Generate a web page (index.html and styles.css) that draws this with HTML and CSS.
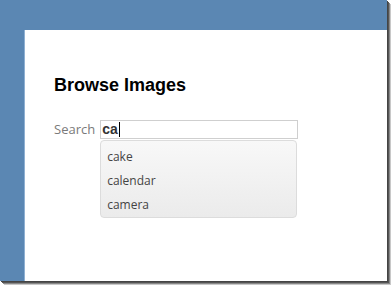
FILE: index.html
```html
<!DOCTYPE html>
<html>
<head>
<meta charset="utf-8">
<link rel="stylesheet" href="styles.css">
</head>
<body>
<div class="frame">
  <div class="panel">
    <h1 class="title">Browse Images</h1>
    <div class="search-row">
      <label class="search-label">Search</label>
      <div class="search-box">
        <div class="search-input"><span class="typed">ca</span><span class="caret"></span></div>
        <ul class="suggestions">
          <li class="item">cake</li>
          <li class="item">calendar</li>
          <li class="item">camera</li>
        </ul>
      </div>
    </div>
  </div>
</div>
</body>
</html>
```

FILE: styles.css
```css
html, body {
  margin: 0;
  padding: 0;
  background: #ffffff;
}
body {
  width: 391px;
  height: 285px;
}
.frame {
  width: 387px;
  height: 281px;
  background: #5b87b3;
  box-shadow: 1px 1px 0 #444, 2px 2px 0 #555, 3px 3px 0 #888, 4px 4px 0 #c8c8c8;
  display: flex;
  flex-direction: column;
  padding: 30px 0 0 24px;
  box-sizing: border-box;
}
.panel {
  flex: 1;
  background: #ffffff;
  border-left: 1px solid #8fb0d2;
  padding: 45px 0 0 29px;
  box-sizing: border-box;
}
.title {
  margin: 0;
  font-family: "Liberation Sans", Arial, sans-serif;
  font-weight: bold;
  font-size: 18px;
  line-height: 21px;
  color: #000;
}
.search-row {
  display: flex;
  align-items: flex-start;
  margin-top: 24px;
}
.search-label {
  font-family: "Open Sans", sans-serif;
  font-size: 13px;
  color: #7a7a7a;
  line-height: 19px;
  margin-right: 5px;
}
.search-box {
  position: relative;
  width: 198px;
}
.search-input {
  height: 19px;
  border: 1px solid #cfcfcf;
  box-sizing: border-box;
  display: flex;
  align-items: center;
  padding-left: 1px;
}
.typed {
  font-family: "Liberation Sans", Arial, sans-serif;
  font-size: 14px;
  font-weight: bold;
  color: #333;
  line-height: 17px;
}
.caret {
  width: 1px;
  height: 15px;
  background: #000;
  margin-left: 1px;
}
.suggestions {
  position: absolute;
  left: 0;
  top: 20px;
  width: 197px;
  height: 78px;
  margin: 0;
  padding: 4px 0 0 0;
  list-style: none;
  box-sizing: border-box;
  border: 1px solid #dcdcdc;
  border-radius: 4px;
  background: linear-gradient(#f8f8f8, #ebebeb);
}
.item {
  font-family: "Open Sans", sans-serif;
  font-size: 12px;
  color: #444;
  height: 24px;
  line-height: 24px;
  padding-left: 6px;
}
```
